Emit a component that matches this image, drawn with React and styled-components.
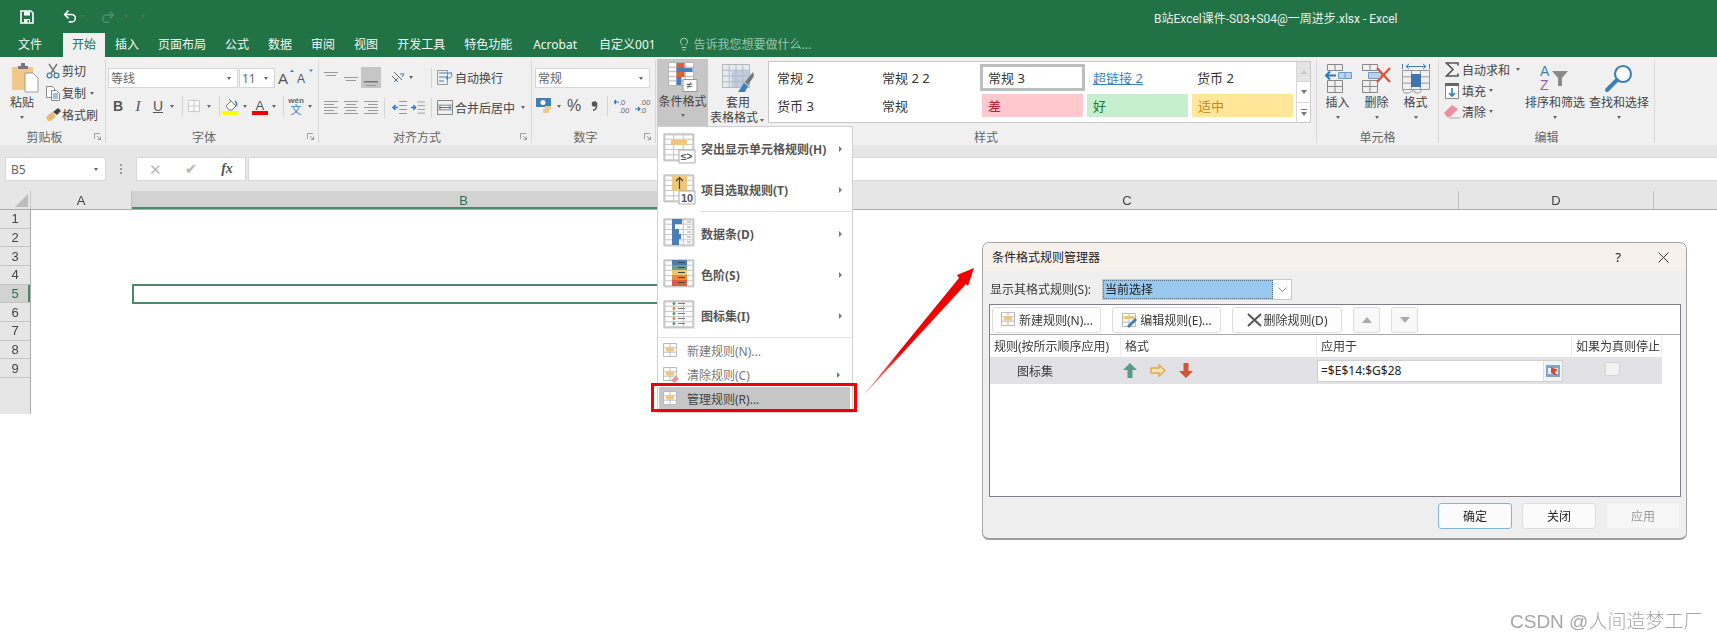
import React from "react";
import styled, { createGlobalStyle } from "styled-components";
import { Undo2, Redo2, Lightbulb } from "lucide-react";

const GlobalStyle = createGlobalStyle`
  html, body {
    margin: 0;
    padding: 0;
    background: #fff;
    overflow: hidden;
  }
  body {
    font-family: "Noto Sans", "Noto Sans CJK SC", sans-serif;
    font-size: 12px;
    color: #444;
  }
`;

const Page = styled.div`
  position: relative;
  width: 1717px;
  height: 639px;
  overflow: hidden;
  filter: blur(0.3px);
`;

/* title + tabs */
const TitleBar = styled.div`
  display: flex;
  align-items: center;
  height: 33px;
  background: #217346;
  color: #fff;
`;

const Qat = styled.span`
  display: inline-flex;
  align-items: center;
  justify-content: center;
  width: ${(p) => p.$w}px;
`;

const DocTitle = styled.div`
  margin-left: 1004px;
  margin-top: 1px;
  font-family: Roboto, "Noto Sans CJK SC", sans-serif;
  font-size: 12px;
  color: #e8f1ec;
  white-space: nowrap;
`;

const TabBar = styled.div`
  display: flex;
  align-items: stretch;
  gap: 1px;
  height: 24px;
  padding-left: 9px;
  background: #217346;
`;

const Tab = styled.div`
  display: flex;
  align-items: center;
  padding: 0 9px 2px;
  margin-left: ${(p) => p.$ml || 0}px;
  color: ${(p) => (p.$active ? "#217346" : "#f2f7f4")};
  background: ${(p) => (p.$active ? "#f0f0f0" : "transparent")};
`;

const TellMe = styled.div`
  display: flex;
  align-items: center;
  gap: 3px;
  margin-left: 11px;
  padding-bottom: 2px;
  color: #9dc4ae;
`;

/* ribbon */
const Ribbon = styled.div`
  display: flex;
  height: 88px;
  padding: 3px 0 2px;
  box-sizing: border-box;
  background: #f0f0f0;
`;

const Group = styled.div`
  display: flex;
  flex-direction: column;
  flex: none;
  width: ${(p) => p.$w}px;
  box-sizing: border-box;
  border-right: 1px solid #d8d8d8;
`;

const GroupBody = styled.div`
  display: flex;
  height: 66px;
  padding-left: ${(p) => p.$pl || 0}px;
`;

const GroupStack = styled(GroupBody)`
  flex-direction: column;
  gap: ${(p) => p.$gap || 8}px;
  padding-top: ${(p) => p.$pt || 8}px;
  box-sizing: border-box;
`;

const LabelRow = styled.div`
  display: flex;
  align-items: center;
  height: 17px;
  padding-top: 4px;
  box-sizing: border-box;
  color: #666;
`;

const GroupLabel = styled.div`
  flex: 1;
  text-align: center;
`;

const Launcher = styled.span`
  display: inline-flex;
  justify-content: center;
  width: 16px;
`;

const BigButton = styled.div`
  display: flex;
  flex-direction: column;
  align-items: center;
  flex: none;
  width: ${(p) => p.$w}px;
  line-height: 18px;
  text-align: center;
  white-space: nowrap;
`;

const BigIcon = styled.div`
  display: flex;
  align-items: center;
  justify-content: center;
  height: 30px;
  margin-top: 3px;
  margin-bottom: 1px;
`;

const CondButton = styled(BigButton)`
  height: 67px;
  margin-top: -1px;
  background: #c6c6c6;
  line-height: 17px;
`;

const TwoLine = styled.div`
  line-height: 15px;
  margin-top: 1px;
`;

const Caret = styled.span`
  display: inline-flex;
  align-items: center;
  justify-content: center;
  flex: none;
  width: ${(p) => p.$w || 8}px;
  height: ${(p) => p.$h || "auto"};
  &::before {
    content: "";
    border-left: 2.5px solid transparent;
    border-right: 2.5px solid transparent;
    border-top: 3px solid #666;
  }
`;

const CaretLine = styled(Caret)`
  width: 100%;
  height: 10px;
`;

const SmallCol = styled.div`
  display: flex;
  flex-direction: column;
  flex: none;
  width: ${(p) => p.$w}px;
  margin-top: ${(p) => p.$mt || 0}px;
`;

const SmallRow = styled.div`
  display: flex;
  align-items: center;
  height: ${(p) => p.$h || 21}px;
  white-space: nowrap;
`;

const SmallIcon = styled.span`
  display: inline-flex;
  align-items: center;
  justify-content: center;
  flex: none;
  width: ${(p) => p.$w || 18}px;
`;

const Row = styled.div`
  display: flex;
  align-items: center;
  height: ${(p) => p.$h || 20}px;
  white-space: nowrap;
`;

const Tool = styled.span`
  display: inline-flex;
  align-items: center;
  justify-content: center;
  flex: none;
  align-self: stretch;
  width: ${(p) => p.$w || 20}px;
  background: ${(p) => (p.$on ? "#c6c6c6" : "transparent")};
`;

const Sep = styled.span`
  display: inline-flex;
  justify-content: center;
  flex: none;
  width: ${(p) => p.$w}px;
  &::before {
    content: "";
    width: 1px;
    height: 20px;
    background: #d4d4d4;
  }
`;

const Spacer = styled.span`
  flex: none;
  width: ${(p) => p.$w}px;
`;

const Select = styled.div`
  display: flex;
  align-items: center;
  justify-content: space-between;
  flex: none;
  width: ${(p) => p.$w}px;
  height: 20px;
  padding: 0 4px 0 2px;
  margin-right: ${(p) => p.$mr || 0}px;
  box-sizing: border-box;
  background: #fff;
  border: 1px solid #d6d6d6;
  font-size: ${(p) => p.$size || 12}px;
  color: #666;
`;

const Glyph = styled.span`
  font-family: ${(p) => p.$font || '"Liberation Serif", serif'};
  font-size: ${(p) => p.$size || 14}px;
  font-weight: ${(p) => p.$weight || 400};
  font-style: ${(p) => (p.$italic ? "italic" : "normal")};
  text-decoration: ${(p) => (p.$under ? "underline" : "none")};
  color: ${(p) => p.$color || "#555"};
  line-height: 1;
`;

const WenStack = styled.span`
  display: inline-flex;
  flex-direction: column;
  align-items: center;
`;

const WenTop = styled.span`
  font-family: "Liberation Sans", sans-serif;
  font-size: 8px;
  font-weight: 700;
  line-height: 7px;
  color: #666;
`;

const WenBottom = styled.span`
  font-size: 11px;
  line-height: 11px;
  color: #3f7fb8;
`;

/* style gallery */
const Gallery = styled.div`
  display: flex;
  flex: none;
  width: 543px;
  height: 62px;
  margin-top: 1px;
  box-sizing: border-box;
  background: #fff;
  border: 1px solid #c8c8c8;
`;

const GalleryGrid = styled.div`
  display: grid;
  grid-template-columns: repeat(5, 105px);
  grid-template-rows: 27px 23px;
  row-gap: 3px;
  flex: none;
  width: 527px;
  padding: 2px 0 0 1px;
  box-sizing: border-box;
`;

const cellTones = {
  plain: "color:#333;padding-left:7px;",
  chosen: "color:#333;padding-left:5px;border:3px solid #bdbdbd;background:#fff;",
  link: "color:#3b7fc4;text-decoration:underline;padding-left:8px;",
  bad: "color:#c2202c;background:#ffc7ce;margin:0 2px;padding-left:6px;",
  good: "color:#1f7a35;background:#c6efce;margin:0 2px;padding-left:6px;",
  neutral: "color:#c08a1c;background:#ffe699;margin:0 2px;padding-left:6px;",
};

const StyleCell = styled.div`
  display: flex;
  align-items: center;
  box-sizing: border-box;
  font-size: 13px;
  white-space: pre;
  ${(p) => cellTones[p.$tone || "plain"]}
`;

const GalleryScroll = styled.div`
  display: flex;
  flex-direction: column;
  flex: 1;
  border-left: 1px solid #d8d8d8;
`;

const ScrollBtn = styled.div`
  display: flex;
  flex-direction: column;
  align-items: center;
  justify-content: center;
  gap: 2px;
  flex: 1;
  background: ${(p) => (p.$off ? "#e4e4e4" : "#fff")};
  border-bottom: 1px solid #d8d8d8;
  &:last-child {
    border-bottom: 0;
  }
`;

/* formula bar */
const Band = styled.div`
  height: ${(p) => p.$h}px;
  background: #e6e6e6;
`;

const FormulaBar = styled.div`
  display: flex;
  align-items: stretch;
  height: 24px;
  padding-left: 5px;
  background: #e6e6e6;
`;

const NameBox = styled.div`
  display: flex;
  align-items: center;
  justify-content: space-between;
  width: 101px;
  padding: 0 5px;
  box-sizing: border-box;
  background: #fff;
  border: 1px solid #d8d8d8;
  font-size: 12px;
  color: #666;
`;

const Dots = styled.div`
  display: flex;
  flex-direction: column;
  justify-content: center;
  align-items: center;
  gap: 2px;
  width: 30px;
  & > i {
    width: 2px;
    height: 2px;
    background: #999;
  }
`;

const FxBox = styled.div`
  display: flex;
  align-items: center;
  width: 110px;
  box-sizing: border-box;
  background: #fff;
  border: 1px solid #d8d8d8;
`;

const FxSlot = styled.span`
  display: inline-flex;
  justify-content: center;
  width: 36px;
`;

const FormulaInput = styled.div`
  flex: 1;
  margin-left: 2px;
  background: #fff;
  border: 1px solid #d8d8d8;
  border-right: 0;
`;

/* sheet */
const ColHead = styled.div`
  display: flex;
  height: 18px;
  background: #e6e6e6;
  border-bottom: 1px solid #ababab;
  color: #444;
  font-family: "Liberation Sans", sans-serif;
  font-size: 13px;
`;

const Corner = styled.div`
  display: flex;
  justify-content: flex-end;
  align-items: flex-end;
  flex: none;
  width: 31px;
  padding: 0 2px 2px 0;
  box-sizing: border-box;
  border-right: 1px solid #c8c8c8;
`;

const Col = styled.div`
  display: flex;
  align-items: center;
  justify-content: center;
  flex: none;
  width: ${(p) => p.$w}px;
  box-sizing: border-box;
  border-right: 1px solid #c0c0c0;
  background: ${(p) => (p.$sel ? "#d2d2d2" : "transparent")};
  box-shadow: ${(p) => (p.$sel ? "inset 0 -2px 0 #4a8a68" : "none")};
  color: ${(p) => (p.$sel ? "#217346" : "#444")};
`;

const SheetBody = styled.div`
  display: flex;
  height: 204px;
`;

const RowHeads = styled.div`
  flex: none;
  width: 31px;
  box-sizing: border-box;
  background: #e6e6e6;
  border-right: 1px solid #ababab;
`;

const RowHead = styled.div`
  display: flex;
  align-items: center;
  justify-content: center;
  height: 18.67px;
  box-sizing: border-box;
  border-bottom: 1px solid #c4c4c4;
  font-family: "Liberation Sans", sans-serif;
  font-size: 13px;
  color: ${(p) => (p.$sel ? "#217346" : "#444")};
  background: ${(p) => (p.$sel ? "#d2d2d2" : "transparent")};
  box-shadow: ${(p) => (p.$sel ? "inset -2px 0 0 #4a8a68" : "none")};
`;

const Cells = styled.div`
  flex: 1;
  padding: 74px 0 0 101px;
  background: #fff;
`;

const ActiveCell = styled.div`
  width: 664px;
  height: 20px;
  box-sizing: border-box;
  border: 2px solid #4a8a68;
`;

/* drop menu */
const Menu = styled.div`
  position: absolute;
  left: 657px;
  top: 126px;
  width: 196px;
  height: 287px;
  box-sizing: border-box;
  padding-top: 1px;
  background: #fff;
  border: 1px solid #d0d0d0;
`;

const BigItem = styled.div`
  display: flex;
  align-items: center;
  height: 41px;
  padding-left: 5px;
  font-weight: 700;
  color: #555;
  white-space: nowrap;
`;

const ItemIcon = styled.span`
  display: inline-flex;
  flex: none;
  width: 38px;
`;

const ItemText = styled.span`
  flex: 1;
`;

const ItemArrow = styled.span`
  flex: none;
  width: 0;
  height: 0;
  margin-right: 10px;
  border-top: 3px solid transparent;
  border-bottom: 3px solid transparent;
  border-left: 3px solid #777;
`;

const MenuLine = styled.div`
  height: 1px;
  margin: 1px 0 1px ${(p) => p.$ml || 0}px;
  background: #e2e2e2;
`;

const SmallItem = styled.div`
  display: flex;
  align-items: center;
  height: 24px;
  margin: 0 2px 0 1px;
  padding-left: 3px;
  color: ${(p) => (p.$hot ? "#444" : "#777")};
  background: ${(p) => (p.$hot ? "#c6c6c6" : "transparent")};
  white-space: nowrap;
`;

const SmallItemIcon = styled.span`
  display: inline-flex;
  flex: none;
  width: 25px;
`;

const RedBox = styled.div`
  position: absolute;
  left: 651px;
  top: 383px;
  width: 206px;
  height: 29px;
  box-sizing: border-box;
  border: 3px solid #f00000;
`;

const ArrowLayer = styled.svg`
  position: absolute;
  left: 855px;
  top: 260px;
`;

/* dialog */
const Dialog = styled.div`
  position: absolute;
  left: 982px;
  top: 242px;
  display: flex;
  flex-direction: column;
  width: 705px;
  height: 298px;
  box-sizing: border-box;
  background: #efefef;
  border: 1px solid #a4a4a4;
  border-bottom: 2px solid #9c9c9c;
  border-radius: 7px;
  overflow: hidden;
  color: #3a3a3a;
`;

const DialogTitle = styled.div`
  display: flex;
  align-items: center;
  flex: none;
  height: 28px;
  padding-left: 9px;
  background: #f8f0eb;
  color: #222;
`;

const TitleText = styled.div`
  flex: 1;
`;

const TitleBtn = styled.span`
  display: inline-flex;
  justify-content: center;
  width: ${(p) => p.$w}px;
  font-size: 13px;
`;

const ShowRow = styled.div`
  display: flex;
  align-items: center;
  flex: none;
  height: 33px;
  padding: 3px 0 0 7px;
  box-sizing: border-box;
`;

const ShowLabel = styled.div`
  flex: none;
  width: 112px;
`;

const Combo = styled.div`
  display: flex;
  width: 190px;
  height: 21px;
  box-sizing: border-box;
  background: #fff;
  border: 1px solid #c8c8c8;
`;

const ComboValue = styled.div`
  flex: 1;
  padding-left: 2px;
  background: #99c9ee;
  outline: 1px dotted #55708a;
  outline-offset: -1px;
  line-height: 19px;
  color: #222;
`;

const ComboDrop = styled.div`
  display: flex;
  align-items: center;
  justify-content: center;
  width: 18px;
`;

const ListFrame = styled.div`
  display: flex;
  flex-direction: column;
  flex: none;
  height: 193px;
  margin: 0 5px 0 6px;
  box-sizing: border-box;
  background: #fff;
  border: 1px solid #7f7f88;
`;

const ListToolbar = styled.div`
  display: flex;
  align-items: center;
  flex: none;
  gap: 11px;
  height: 30px;
  padding-left: 2px;
  box-sizing: border-box;
  background: #fff;
  border-bottom: 1px solid #a8a8a8;
`;

const RuleButton = styled.div`
  display: flex;
  align-items: center;
  justify-content: center;
  gap: 2px;
  flex: none;
  width: ${(p) => p.$w}px;
  height: 26px;
  box-sizing: border-box;
  background: ${(p) => (p.$off ? "#f8f8f8" : "#fdfdfd")};
  border: 1px solid #dcdcdc;
  border-radius: 3px;
`;

const RuleGrid = styled.div`
  display: grid;
  grid-template-columns: 131px 196px 255px 90px;
  grid-template-rows: 22px 27px;
  width: 672px;
`;

const HeadCell = styled.div`
  display: flex;
  align-items: center;
  padding-left: 4px;
  border-right: 1px solid #ececec;
  white-space: nowrap;
`;

const DataCell = styled.div`
  display: flex;
  align-items: center;
  justify-content: ${(p) => (p.$center ? "center" : "flex-start")};
  gap: ${(p) => p.$gap || 0}px;
  padding-left: ${(p) => p.$pl || 0}px;
  background: #e1e1e6;
`;

const RangeInput = styled.div`
  display: flex;
  align-items: center;
  justify-content: space-between;
  width: 246px;
  height: 22px;
  padding-left: 3px;
  box-sizing: border-box;
  background: #fff;
  border: 1px solid #d0d0d0;
  color: #222;
`;

const RangePick = styled.span`
  display: inline-flex;
  align-items: center;
  justify-content: center;
  width: 18px;
  height: 20px;
  background: #f2f2f2;
  border-left: 1px solid #dcdcdc;
`;

const StopBox = styled.div`
  width: 13px;
  height: 12px;
  margin-right: 10px;
  margin-bottom: 3px;
  background: #f3f3f3;
  border: 1px solid #d4d4d4;
  border-radius: 2px;
`;

const DialogFooter = styled.div`
  display: flex;
  justify-content: flex-end;
  gap: 10px;
  padding: 6px 6px 0 0;
`;

const FootButton = styled.div`
  display: flex;
  align-items: center;
  justify-content: center;
  width: 74px;
  height: 26px;
  box-sizing: border-box;
  border-radius: 3px;
  background: ${(p) => (p.$off ? "#f6f6f6" : "#fbfbfb")};
  border: 1px solid ${(p) => (p.$main ? "#7fb4dc" : p.$off ? "#f0f0f0" : "#dedede")};
  color: ${(p) => (p.$off ? "#999" : "#222")};
`;

const Watermark = styled.div`
  position: absolute;
  left: 1510px;
  top: 606px;
  font-family: "Liberation Sans", "Noto Sans CJK SC", sans-serif;
  font-size: 19px;
  font-weight: 300;
  color: #a6a6a6;
  white-space: nowrap;
`;

/* drawings */
const Ico = ({ w, h, children }) => (
  <svg width={w} height={h} viewBox={`0 0 ${w} ${h}`} fill="none">
    {children}
  </svg>
);

const gridD = (x, y, w, h, c, r) => {
  let d = `M${x} ${y}h${w}v${h}h${-w}z`;
  for (let i = 1; i < c; i++) d += `M${x + (w * i) / c} ${y}v${h}`;
  for (let i = 1; i < r; i++) d += `M${x} ${y + (h * i) / r}h${w}`;
  return d;
};

const GreyGrid = ({ x = 0.5, y = 0.5, w, h, c, r, color = "#aeaeae" }) => (
  <path d={gridD(x, y, w, h, c, r)} stroke={color} />
);

const SaveIcon = () => (
  <Ico w={14} h={14}>
    <path d="M1 1h10l2 2v10H1z" stroke="#fff" strokeWidth="1.6" />
    <path d="M4 1.5h6v4H4zM4 9h6v4H4z" fill="#fff" />
    <path d="M7.5 10h1.5v2.5H7.5z" fill="#217346" />
  </Ico>
);

const PasteIcon = () => (
  <Ico w={33} h={30}>
    <g transform="translate(5 0)">
      <path d="M1 4h21v23H1z" fill="#f0c98a" />
      <path d="M7 3h3V0h4v3h3v3H7z" fill="#777" />
      <path d="M14 10h8l5 5v14H14z" fill="#fff" stroke="#9a9a9a" />
    </g>
  </Ico>
);

const CutIcon = () => (
  <Ico w={14} h={16}>
    <path d="M3 1l6 9M11 1L5 10" stroke="#777" strokeWidth="1.4" />
    <circle cx="3.5" cy="12.5" r="2.4" stroke="#3f7fb8" strokeWidth="1.3" />
    <circle cx="10.5" cy="12.5" r="2.4" stroke="#3f7fb8" strokeWidth="1.3" />
  </Ico>
);

const CopyIcon = () => (
  <Ico w={14} h={15}>
    <path d="M.5.5h6l2 2v9h-8z" fill="#fff" stroke="#888" />
    <path d="M5.5 4.5h5l3 3v7h-8z" fill="#fff" stroke="#888" />
    <path d="M7 8h5M7 10h5M7 12h5" stroke="#3f7fb8" />
  </Ico>
);

const PainterIcon = () => (
  <Ico w={15} h={13}>
    <path d="M0 9l6-5 4 4-5 5H2z" fill="#e8b96a" />
    <path d="M7 4l5-4 3 3-4 4z" fill="#444" />
  </Ico>
);

const FontGrow = ({ small, up }) => (
  <Ico w={18} h={18}>
    <text x="2" y={small ? 14 : 14.5} fontFamily="Liberation Sans" fontSize={small ? 12 : 15} fill="#555">A</text>
    <path d={up ? "M14 3l2-2.5L18 3z" : "M14 .5h4L16 3z"} fill="#3f7fb8" />
  </Ico>
);

const BorderIcon = () => (
  <Ico w={14} h={14}>
    <path d={gridD(.5, .5, 13, 13, 2, 2)} stroke="#c2c2c2" fill="#fafafa" />
  </Ico>
);

const FillIcon = () => (
  <Ico w={16} h={17}>
    <path d="M4 8l5-5 5 5-4 4H7z" fill="#fff" stroke="#777" />
    <path d="M7 1l3 3" stroke="#777" />
    <path d="M13 3c2 2 2 4 1 5" stroke="#3f7fb8" strokeWidth="1.5" />
    <path d="M0 13h16v4H0z" fill="#ffff00" />
  </Ico>
);

const ColorIcon = () => (
  <Ico w={16} h={17}>
    <text x="3.5" y="12" fontFamily="Liberation Sans" fontSize="13" fill="#555">A</text>
    <path d="M0 13h16v4H0z" fill="#f00000" />
  </Ico>
);

const AlignV = ({ pos }) => {
  const y = pos === "top" ? 2 : pos === "mid" ? 7 : 12;
  return (
    <Ico w={14} h={16}>
      <path d={`M0 ${y}.5h14M2 ${y + 3}.5h10`} stroke="#999" />
      {pos === "bottom" && <path d="M0 11.5h14" stroke="#777" />}
    </Ico>
  );
};

const AlignH = ({ pos }) => {
  const short = pos === "left" ? "0" : pos === "mid" ? "2" : "4";
  return (
    <Ico w={14} h={15}>
      <path d={`M0 1.5h14M${short} 4.5h10M0 7.5h14M${short} 10.5h10M0 13.5h14`} stroke="#999" />
    </Ico>
  );
};

const OrientIcon = () => (
  <Ico w={14} h={14}>
    <path d="M1 5l6 6M3 1l8 8" stroke="#666" />
    <path d="M9 3l4 0-2 3" stroke="#3f7fb8" />
    <path d="M3 11l4-4" stroke="#3f7fb8" />
  </Ico>
);

const IndentIcon = ({ dir }) => (
  <Ico w={15} h={16}>
    <path d="M7 1.5h8M7 5.5h8M7 9.5h8M7 13.5h8" stroke="#999" />
    {dir === "out" ? (
      <path d="M6 7.5H1M3.5 5L1 7.5 3.5 10" stroke="#2f78bd" strokeWidth="1.5" />
    ) : (
      <path d="M0 7.5h5M2.5 5L5 7.5 2.5 10" stroke="#2f78bd" strokeWidth="1.5" />
    )}
  </Ico>
);

const WrapIcon = () => (
  <Ico w={16} h={15}>
    <path d="M.5.5h10v14H.5z" stroke="#999" />
    <path d="M2 3h13M2 7h8M2 11h5" stroke="#3f7fb8" />
    <path d="M14 3c2 4 0 5-4 5M11 6l-2 2 2 2" stroke="#3f7fb8" />
  </Ico>
);

const MergeIcon = () => (
  <Ico w={16} h={15}>
    <path d={gridD(.5, .5, 15, 14, 1, 3)} stroke="#888" />
    <path d="M2 7.5h12M4 5.5l-2 2 2 2M12 5.5l2 2-2 2" stroke="#3f7fb8" />
  </Ico>
);

const CurrencyIcon = () => (
  <Ico w={16} h={16}>
    <path d="M0 0h15v9H0z" fill="#3f7fb8" />
    <circle cx="7" cy="4.5" r="2.5" fill="#fff" />
    <path d="M9 8h6v3H9zM7 11h6v4H7z" fill="#f0c98a" />
  </Ico>
);

const CommaIcon = () => (
  <Ico w={7} h={10}>
    <circle cx="3.5" cy="3" r="2.8" fill="#555" />
    <path d="M5.5 4C6 6.5 4.5 8.5 2 9.5" stroke="#555" strokeWidth="1.3" />
  </Ico>
);

const DecIcon = ({ more }) => (
  <Ico w={16} h={16}>
    <text x="5" y="7" fontFamily="Liberation Sans" fontSize="7.5" fill="#666">{more ? ".00" : ".0"}</text>
    <text x="5" y="14.5" fontFamily="Liberation Sans" fontSize="7.5" fill="#666">{more ? ".0" : ".00"}</text>
    {more ? (
      <path d="M0 11h5M3 9l2 2-2 2" stroke="#2f78bd" strokeWidth="1.2" />
    ) : (
      <path d="M5 4H0M2 2L0 4l2 2" stroke="#2f78bd" strokeWidth="1.2" />
    )}
  </Ico>
);

const CondIcon = () => (
  <Ico w={30} h={30}>
    <path d="M.5.5h25v23H.5z" fill="#fff" />
    <GreyGrid w={25} h={23} c={3} r={5} color="#b4b4b4" />
    <path d="M8.5 1h8v5h-8zM8.5 10h8v5h-8z" fill="#d9613c" />
    <path d="M8.5 6h16v4h-16zM8.5 15h5v8h-5z" fill="#4a7ebb" />
    <path d="M15 17.5h14v12H15z" fill="#fff" stroke="#999" />
    <text x="18" y="27" fontFamily="Liberation Sans" fontSize="11" fill="#555">≠</text>
  </Ico>
);

const TableIcon = () => (
  <Ico w={32} h={29}>
    <path d="M.5.5h27v23H.5z" fill="#e4ebf4" />
    <path d="M9.5 7h18v17h-18z" fill="#bccee5" />
    <GreyGrid w={27} h={23} c={4} r={4} color="#b8b8b8" />
    <path d="M31 8l-8 10 3 3 6-9z" fill="#777" />
    <path d="M22 19l-6 9h7l3-6z" fill="#3f7fb8" />
  </Ico>
);

const InsertIcon = () => (
  <Ico w={28} h={29}>
    <path d={gridD(3.5, .5, 15, 6, 2, 1)} stroke="#888" />
    <path d={gridD(3.5, 16.5, 15, 12, 2, 2)} stroke="#888" />
    <path d={gridD(14.5, 8.5, 13, 6, 2, 1)} stroke="#6f9cc6" fill="#bcd2e8" />
    <path d="M12 11.5H2M6 7.5l-4 4 4 4" stroke="#2f78bd" strokeWidth="2" />
  </Ico>
);

const DeleteIcon = () => (
  <Ico w={30} h={29}>
    <path d={gridD(.5, .5, 15, 6, 2, 1)} stroke="#888" />
    <path d={gridD(.5, 16.5, 15, 12, 2, 2)} stroke="#888" />
    <path d="M6.5 8.5h13v6h-13z" fill="#bcd2e8" stroke="#6f9cc6" />
    <path d="M15 4l13 14M28 4L15 18" stroke="#d9573a" strokeWidth="2.4" />
  </Ico>
);

const FormatIcon = () => (
  <Ico w={28} h={31}>
    <path d="M.5 1v5M27.5 1v5M4 3.5h20M4 3.5l3-2.5M4 3.5L7 6M24 3.5L21 1M24 3.5L21 6" stroke="#3f7fb8" />
    <path d={gridD(.5, 7.5, 27, 19, 3, 3)} stroke="#999" />
    <path d="M9 11h10v13H9z" fill="#3f73ad" />
    <path d="M.5 27l2 3h5l2-2h3l1 2h4l2-3" stroke="#999" />
  </Ico>
);

const SigmaIcon = () => (
  <Ico w={14} h={15}>
    <path d="M13 3.5V1H1.5L8 7.5 1.5 14H13v-2.5" stroke="#555" strokeWidth="1.6" />
  </Ico>
);

const FillDownIcon = () => (
  <Ico w={14} h={16}>
    <path d="M.5.5h13v15H.5z" fill="#fff" stroke="#888" />
    <path d="M0 0h14v3H0z" fill="#666" />
    <path d="M7 5v8M4 10l3 3 3-3" stroke="#2f78bd" strokeWidth="1.6" />
  </Ico>
);

const EraserIcon = () => (
  <Ico w={16} h={15}>
    <path d="M0 9l8-8 6 4-8 8H3z" fill="#ee8ca0" />
    <path d="M5 14h11" stroke="#aaa" />
  </Ico>
);

const SortIcon = () => (
  <Ico w={30} h={30}>
    <text x="0" y="13" fontFamily="Liberation Sans" fontSize="14" fill="#3f7fb8">A</text>
    <text x="0" y="26.5" fontFamily="Liberation Sans" fontSize="14" fill="#8f5fb5">Z</text>
    <path d="M12 8h16l-6 7v8h-4v-8z" fill="#8a8a8a" />
  </Ico>
);

const FindIcon = () => (
  <Ico w={28} h={29}>
    <circle cx="18" cy="10" r="8" stroke="#3f7fb8" strokeWidth="2.2" fill="#fff" />
    <path d="M12 16L2 26" stroke="#3f7fb8" strokeWidth="4" strokeLinecap="round" />
  </Ico>
);

const LauncherIcon = () => (
  <Ico w={7} h={7}>
    <path d="M.5 6V.5H6M3 3l3.5 3.5M6.5 3.5v3h-3" stroke="#888" strokeWidth=".8" />
  </Ico>
);

const MenuPic = ({ children, rows = 5 }) => (
  <Ico w={33} h={31}>
    <path d="M1.5 1.5h29v26h-29z" fill="#fff" stroke="#cfcfcf" strokeWidth="2" />
    <GreyGrid x={1} y={1} w={29} h={26} c={3} r={rows} color="#c4c4c4" />
    {children}
  </Ico>
);

const MiniRule = ({ pen }) => (
  <Ico w={17} h={18}>
    <path d={gridD(1.5, 1.5, 13, 13, 2, 3)} stroke="#bbb" fill="#fff" />
    <path d="M4 5.5h8v4H4z" fill="#efc77b" />
    {pen === "eraser" && <path d="M9 14l5-4 3 3-5 4z" fill="#ee8ca0" />}
  </Ico>
);

const ArrowUpIco = () => (
  <Ico w={14} h={15}>
    <path d="M7 0l7 7H9.5v8h-5V7H0z" fill="#5b9a85" />
  </Ico>
);

const ArrowRightIco = () => (
  <Ico w={16} h={13}>
    <path d="M9 1l6 5.5-6 5.5V9H1V4h8z" fill="#f9e2b0" stroke="#d9a94e" strokeWidth="1.4" />
  </Ico>
);

const ArrowDownIco = () => (
  <Ico w={14} h={15}>
    <path d="M4.5 0h5v8H14l-7 7-7-7h4.5z" fill="#cf5533" />
  </Ico>
);

const Tri = ({ up, color = "#aaa", w = 10, h = 6 }) => (
  <Ico w={w} h={h}>
    <path d={up ? `M${w / 2} 0L${w} ${h}H0z` : `M0 0H${w}L${w / 2} ${h}z`} fill={color} />
  </Ico>
);

const TAB_NAMES = ["插入", "页面布局", "公式", "数据", "审阅", "视图", "开发工具", "特色功能"];
const ROW_NUMBERS = [1, 2, 3, 4, 5, 6, 7, 8, 9];

const Launch = () => (
  <Launcher>
    <LauncherIcon />
  </Launcher>
);

const App = () => (
  <Page>
    <GlobalStyle />
    <TitleBar>
      <Qat $w={20} />
      <Qat $w={14}><SaveIcon /></Qat>
      <Qat $w={28} />
      <Qat $w={16}><Undo2 size={17} color="#fff" strokeWidth={2.4} /></Qat>
      <Caret $w={10} />
      <Qat $w={12} />
      <Qat $w={16}><Redo2 size={16} color="#4f8f6e" strokeWidth={2.2} /></Qat>
      <Caret $w={20} />
      <Qat $w={14}><Caret $w={8} /></Qat>
      <DocTitle>B站Excel课件-S03+S04@一周进步.xlsx - Excel</DocTitle>
    </TitleBar>
    <TabBar>
      <Tab>文件</Tab>
      <Tab $active $ml={11}>开始</Tab>
      {TAB_NAMES.map((name) => (
        <Tab key={name}>{name}</Tab>
      ))}
      <Tab $ml={2}>Acrobat</Tab>
      <Tab $ml={3}>自定义001</Tab>
      <TellMe>
        <Lightbulb size={14} color="#cfe2d7" strokeWidth={1.4} />
        告诉我您想要做什么...
      </TellMe>
    </TabBar>

    <Ribbon>
      <Group $w={106}>
        <GroupBody>
          <BigButton $w={44}>
            <BigIcon><PasteIcon /></BigIcon>
            粘贴
            <CaretLine />
          </BigButton>
          <SmallCol $w={60}>
            <SmallRow $h={22}><SmallIcon><CutIcon /></SmallIcon>剪切</SmallRow>
            <SmallRow $h={22}><SmallIcon><CopyIcon /></SmallIcon>复制<Caret $w={12} $h="10px" /></SmallRow>
            <SmallRow $h={21}><SmallIcon><PainterIcon /></SmallIcon>格式刷</SmallRow>
          </SmallCol>
        </GroupBody>
        <LabelRow><GroupLabel>剪贴板</GroupLabel><Launch /></LabelRow>
      </Group>

      <Group $w={213}>
        <GroupStack $pl={2}>
          <Row>
            <Select $w={130} $mr={1}>等线<Caret $w={8} /></Select>
            <Select $w={36}>11<Caret $w={8} /></Select>
            <Tool $w={20}><FontGrow up /></Tool>
            <Tool $w={18}><FontGrow small /></Tool>
          </Row>
          <Row>
            <Tool><Glyph $font='"Liberation Sans", sans-serif' $weight={700} $size={14}>B</Glyph></Tool>
            <Tool><Glyph $italic $size={15} $font='"Liberation Serif", serif'>I</Glyph></Tool>
            <Tool><Glyph $under $font='"Liberation Sans", sans-serif' $size={14}>U</Glyph></Tool>
            <Caret $w={8} />
            <Sep $w={12} />
            <Tool $w={12}><BorderIcon /></Tool>
            <Caret $w={18} />
            <Sep $w={2} />
            <Tool><FillIcon /></Tool>
            <Caret $w={10} />
            <Tool><ColorIcon /></Tool>
            <Caret $w={8} />
            <Sep $w={10} />
            <Tool $w={16}>
              <WenStack>
                <WenTop>wén</WenTop>
                <WenBottom>文</WenBottom>
              </WenStack>
            </Tool>
            <Caret $w={12} />
          </Row>
        </GroupStack>
        <LabelRow><GroupLabel>字体</GroupLabel><Launch /></LabelRow>
      </Group>

      <Group $w={213}>
        <GroupStack $pl={2} $pt={7} $gap={9}>
          <Row $h={21}>
            <Tool><AlignV pos="top" /></Tool>
            <Tool><AlignV pos="mid" /></Tool>
            <Tool $on><AlignV pos="bottom" /></Tool>
            <Spacer $w={7} />
            <Tool><OrientIcon /></Tool>
            <Caret $w={6} />
            <Spacer $w={16} />
            <Sep $w={2} />
            <Spacer $w={2} />
            <Tool $w={21}><WrapIcon /></Tool>
            自动换行
          </Row>
          <Row $h={21}>
            <Tool><AlignH pos="left" /></Tool>
            <Tool><AlignH pos="mid" /></Tool>
            <Tool><AlignH pos="right" /></Tool>
            <Sep $w={6} />
            <Tool $w={24}><IndentIcon dir="out" /></Tool>
            <Tool $w={14}><IndentIcon dir="in" /></Tool>
            <Spacer $w={5} />
            <Sep $w={2} />
            <Spacer $w={2} />
            <Tool $w={21}><MergeIcon /></Tool>
            合并后居中
            <Caret $w={16} />
          </Row>
        </GroupStack>
        <LabelRow><GroupLabel>对齐方式</GroupLabel><Launch /></LabelRow>
      </Group>

      <Group $w={124}>
        <GroupStack $pl={3}>
          <Row>
            <Select $w={115}>常规<Caret $w={8} /></Select>
          </Row>
          <Row>
            <Tool $w={18}><CurrencyIcon /></Tool>
            <Caret $w={12} />
            <Tool $w={18}><Glyph $font='"Liberation Sans", sans-serif' $size={16}>%</Glyph></Tool>
            <Tool $w={22}><CommaIcon /></Tool>
            <Sep $w={4} />
            <Tool $w={26}><DecIcon /></Tool>
            <Tool $w={16}><DecIcon more /></Tool>
          </Row>
        </GroupStack>
        <LabelRow><GroupLabel>数字</GroupLabel><Launch /></LabelRow>
      </Group>

      <Group $w={661}>
        <GroupBody $pl={1}>
          <CondButton $w={51}>
            <BigIcon><CondIcon /></BigIcon>
            条件格式
            <CaretLine />
          </CondButton>
          <BigButton $w={60}>
            <BigIcon><TableIcon /></BigIcon>
            <TwoLine>
              套用
              <br />
              表格格式<Caret $w={8} $h="10px" />
            </TwoLine>
          </BigButton>
          <Gallery>
            <GalleryGrid>
              <StyleCell>常规 2</StyleCell>
              <StyleCell>常规 2 2</StyleCell>
              <StyleCell $tone="chosen">常规 3</StyleCell>
              <StyleCell $tone="link">超链接 2</StyleCell>
              <StyleCell>货币 2</StyleCell>
              <StyleCell>货币 3</StyleCell>
              <StyleCell>常规</StyleCell>
              <StyleCell $tone="bad">差</StyleCell>
              <StyleCell $tone="good">好</StyleCell>
              <StyleCell $tone="neutral">适中</StyleCell>
            </GalleryGrid>
            <GalleryScroll>
              <ScrollBtn $off><Tri up color="#c4c4c4" w={6} h={4} /></ScrollBtn>
              <ScrollBtn><Tri color="#777" w={6} h={4} /></ScrollBtn>
              <ScrollBtn>
                <Ico w={6} h={1}><path d="M0 .5h6" stroke="#777" /></Ico>
                <Tri color="#777" w={6} h={4} />
              </ScrollBtn>
            </GalleryScroll>
          </Gallery>
        </GroupBody>
        <LabelRow><GroupLabel>样式</GroupLabel></LabelRow>
      </Group>

      <Group $w={122}>
        <GroupBody $pl={1}>
          <BigButton $w={39}><BigIcon><InsertIcon /></BigIcon>插入<CaretLine /></BigButton>
          <BigButton $w={39}><BigIcon><DeleteIcon /></BigIcon>删除<CaretLine /></BigButton>
          <BigButton $w={39}><BigIcon><FormatIcon /></BigIcon>格式<CaretLine /></BigButton>
        </GroupBody>
        <LabelRow><GroupLabel>单元格</GroupLabel></LabelRow>
      </Group>

      <Group $w={216}>
        <GroupBody $pl={3}>
          <SmallCol $w={81} $mt={-1}>
            <SmallRow><SmallIcon $w={20}><SigmaIcon /></SmallIcon>自动求和<Caret $w={16} /></SmallRow>
            <SmallRow><SmallIcon $w={20}><FillDownIcon /></SmallIcon>填充<Caret $w={10} /></SmallRow>
            <SmallRow><SmallIcon $w={20}><EraserIcon /></SmallIcon>清除<Caret $w={10} /></SmallRow>
          </SmallCol>
          <BigButton $w={64}><BigIcon><SortIcon /></BigIcon>排序和筛选<CaretLine /></BigButton>
          <BigButton $w={64}><BigIcon><FindIcon /></BigIcon>查找和选择<CaretLine /></BigButton>
        </GroupBody>
        <LabelRow><GroupLabel>编辑</GroupLabel></LabelRow>
      </Group>
    </Ribbon>

    <Band $h={12} />
    <FormulaBar>
      <NameBox>B5<Caret $w={8} /></NameBox>
      <Dots><i /><i /><i /></Dots>
      <FxBox>
        <FxSlot><Glyph $font='"Liberation Sans", sans-serif' $size={15} $color="#b8b8b8">✕</Glyph></FxSlot>
        <FxSlot><Glyph $font='"DejaVu Sans", sans-serif' $size={15} $color="#b8b8b8">✔</Glyph></FxSlot>
        <FxSlot><Glyph $italic $weight={700} $size={14} $color="#555">fx</Glyph></FxSlot>
      </FxBox>
      <FormulaInput />
    </FormulaBar>
    <Band $h={10} />

    <ColHead>
      <Corner>
        <Ico w={13} h={13}><path d="M13 0v13H0z" fill="#bdbdbd" /></Ico>
      </Corner>
      <Col $w={101}>A</Col>
      <Col $w={664} $sel>B</Col>
      <Col $w={663}>C</Col>
      <Col $w={195}>D</Col>
    </ColHead>
    <SheetBody>
      <RowHeads>
        {ROW_NUMBERS.map((n) => (
          <RowHead key={n} $sel={n === 5}>{n}</RowHead>
        ))}
      </RowHeads>
      <Cells>
        <ActiveCell />
      </Cells>
    </SheetBody>

    <Menu>
      <BigItem>
        <ItemIcon>
          <MenuPic>
            <path d="M8 7h16v5H8z" fill="#efc77b" />
            <path d="M16 17h16v13H16z" fill="#fff" stroke="#aaa" />
            <text x="18" y="27" fontFamily="Liberation Sans" fontSize="10" fill="#555">≤&gt;</text>
          </MenuPic>
        </ItemIcon>
        <ItemText>突出显示单元格规则(H)</ItemText>
        <ItemArrow />
      </BigItem>
      <BigItem>
        <ItemIcon>
          <MenuPic>
            <path d="M9 1h15v16H9z" fill="#efc77b" />
            <path d="M16.5 15V4M13 7l3.5-3.5L20 7" stroke="#444" strokeWidth="1.2" />
            <path d="M16 17h16v13H16z" fill="#fff" stroke="#aaa" />
            <text x="18" y="28" fontFamily="Liberation Sans" fontSize="11" fill="#555">10</text>
          </MenuPic>
        </ItemIcon>
        <ItemText>项目选取规则(T)</ItemText>
        <ItemArrow />
      </BigItem>
      <MenuLine $ml={42} />
      <BigItem>
        <ItemIcon>
          <MenuPic>
            <path d="M9 1h10v5H9zM9 6h3v5H9zM9 11h7v5H9zM9 16h9v5H9zM9 21h7v6H9z" fill="#4a7ebb" />
            <path d="M24 4h4M24 9h4M24 14h4M24 19h4M24 24h4" stroke="#999" />
          </MenuPic>
        </ItemIcon>
        <ItemText>数据条(D)</ItemText>
        <ItemArrow />
      </BigItem>
      <BigItem>
        <ItemIcon>
          <MenuPic>
            <path d="M9 1h15v5H9z" fill="#4a7ebb" />
            <path d="M9 6h15v5H9z" fill="#6f9f88" />
            <path d="M9 11h15v5H9z" fill="#efc77b" />
            <path d="M9 16h15v5H9z" fill="#e88a3c" />
            <path d="M9 21h15v6H9z" fill="#d95f3c" />
            <path d="M15 3.5h7M15 8.5h7M15 13.5h7M15 18.5h7M15 23.5h7" stroke="#444" />
          </MenuPic>
        </ItemIcon>
        <ItemText>色阶(S)</ItemText>
        <ItemArrow />
      </BigItem>
      <BigItem>
        <ItemIcon>
          <MenuPic>
            <circle cx="11" cy="3.5" r="1.5" fill="#5b9a85" />
            <circle cx="11" cy="8.5" r="1.5" fill="#e88a3c" />
            <circle cx="11" cy="13.5" r="1.5" fill="#5b9a85" />
            <circle cx="11" cy="18.5" r="1.5" fill="#e88a3c" />
            <circle cx="11" cy="23.5" r="1.5" fill="#5b9a85" />
            <path d="M15 3.5h7M15 8.5h7M15 13.5h7M15 18.5h7M15 23.5h7" stroke="#777" />
          </MenuPic>
        </ItemIcon>
        <ItemText>图标集(I)</ItemText>
        <ItemArrow />
      </BigItem>
      <MenuLine />
      <SmallItem><SmallItemIcon><MiniRule /></SmallItemIcon>新建规则(N)...</SmallItem>
      <SmallItem>
        <SmallItemIcon><MiniRule pen="eraser" /></SmallItemIcon>
        <ItemText>清除规则(C)</ItemText>
        <ItemArrow />
      </SmallItem>
      <SmallItem $hot><SmallItemIcon><MiniRule /></SmallItemIcon>管理规则(R)...</SmallItem>
    </Menu>
    <RedBox />
    <ArrowLayer width="125" height="145" viewBox="855 260 125 145">
      <defs>
        <linearGradient id="tailFade" x1="862" y1="397" x2="900" y2="352" gradientUnits="userSpaceOnUse">
          <stop offset="0" stopColor="#ffb0b0" />
          <stop offset="1" stopColor="#f00000" />
        </linearGradient>
      </defs>
      <polygon points="862,397 959,278 957,275 974,268 968,286 966,284" fill="url(#tailFade)" />
    </ArrowLayer>

    <Dialog>
      <DialogTitle>
        <TitleText>条件格式规则管理器</TitleText>
        <TitleBtn $w={44}>?</TitleBtn>
        <TitleBtn $w={46}>
          <Ico w={11} h={11}><path d="M.5.5l10 10M10.5.5l-10 10" stroke="#333" /></Ico>
        </TitleBtn>
      </DialogTitle>
      <ShowRow>
        <ShowLabel>显示其格式规则(S):</ShowLabel>
        <Combo>
          <ComboValue>当前选择</ComboValue>
          <ComboDrop>
            <Ico w={9} h={5}><path d="M.5.5l4 4 4-4" stroke="#888" /></Ico>
          </ComboDrop>
        </Combo>
      </ShowRow>
      <ListFrame>
        <ListToolbar>
          <RuleButton $w={109}><MiniRule />新建规则(N)...</RuleButton>
          <RuleButton $w={109}>
            <Ico w={17} h={16}>
              <path d={gridD(1.5, 1.5, 13, 13, 2, 3)} stroke="#bbb" />
              <path d="M3 4h10v3H3z" fill="#efc77b" />
              <path d="M6 14l8-8 2 2-8 8z" fill="#3f7fb8" />
            </Ico>
            编辑规则(E)...
          </RuleButton>
          <RuleButton $w={110}>
            <Ico w={15} h={14}><path d="M1 1l13 12M14 1L1 13" stroke="#555" strokeWidth="2" /></Ico>
            删除规则(D)
          </RuleButton>
          <RuleButton $w={27} $off><Tri up /></RuleButton>
          <RuleButton $w={27} $off><Tri /></RuleButton>
        </ListToolbar>
        <RuleGrid>
          <HeadCell>规则(按所示顺序应用)</HeadCell>
          <HeadCell>格式</HeadCell>
          <HeadCell>应用于</HeadCell>
          <HeadCell>如果为真则停止</HeadCell>
          <DataCell $pl={27}>图标集</DataCell>
          <DataCell $pl={2} $gap={13}>
            <ArrowUpIco />
            <ArrowRightIco />
            <ArrowDownIco />
          </DataCell>
          <DataCell>
            <RangeInput>
              =$E$14:$G$28
              <RangePick>
                <Ico w={14} h={12}>
                  <path d="M0 0h14v12H0z" fill="#7fa6cc" />
                  <path d="M2 3h10v6H2z" fill="#e8eef5" />
                  <path d="M5 2l7 3-3 2 2 4-6-3z" fill="#d9473a" />
                </Ico>
              </RangePick>
            </RangeInput>
          </DataCell>
          <DataCell $center><StopBox /></DataCell>
        </RuleGrid>
      </ListFrame>
      <DialogFooter>
        <FootButton $main>确定</FootButton>
        <FootButton>关闭</FootButton>
        <FootButton $off>应用</FootButton>
      </DialogFooter>
    </Dialog>

    <Watermark>CSDN @人间造梦工厂</Watermark>
  </Page>
);

export default App;
